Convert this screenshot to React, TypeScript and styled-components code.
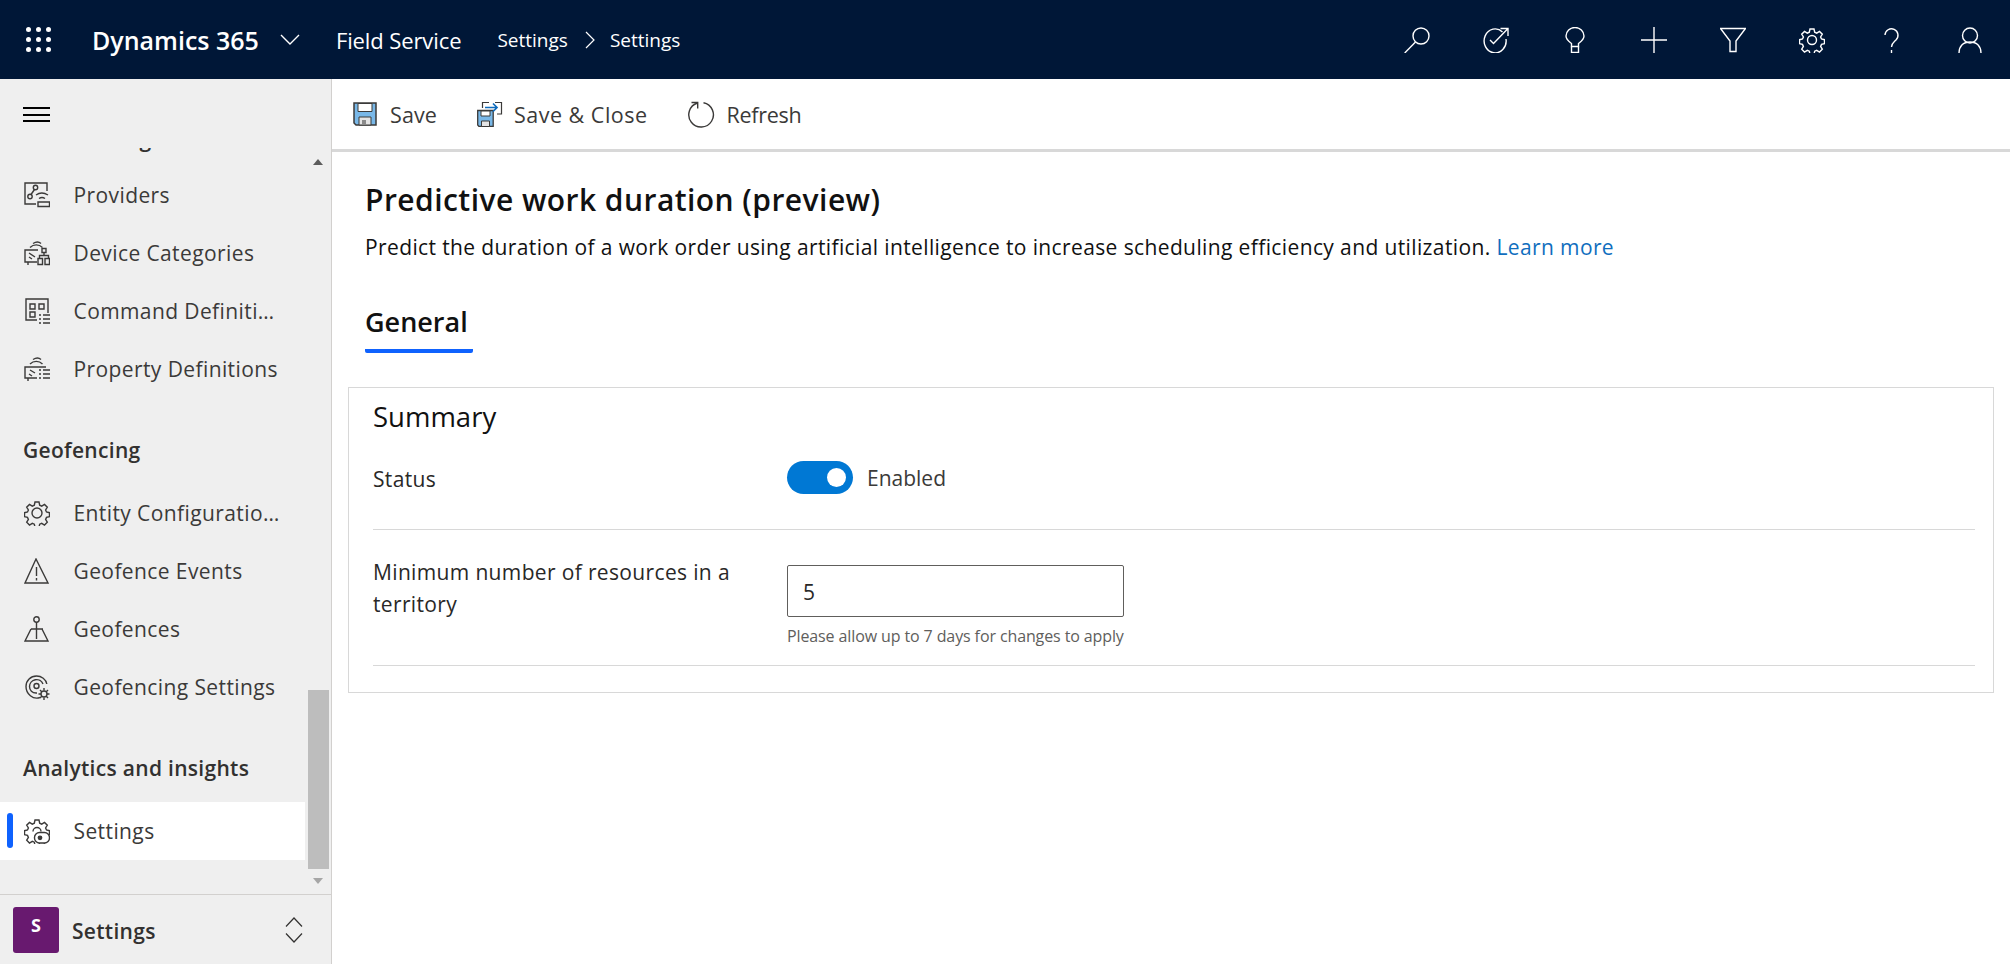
import React from "react";
import styled, { createGlobalStyle } from "styled-components";

const GlobalStyle = createGlobalStyle`
  html, body {
    margin: 0;
    padding: 0;
    height: 100%;
    overflow: hidden;
    background: #fff;
    font-family: "Open Sans", "Noto Sans", sans-serif;
  }
  * { box-sizing: border-box; }
`;

type IconProps = { size?: number; color?: string; children: React.ReactNode };

const Line = ({ size = 26, color = "currentColor", children }: IconProps) => (
  <svg width={size} height={size} viewBox="0 0 26 26" fill="none" stroke={color} strokeWidth="1.4">
    {children}
  </svg>
);

const gearPath =
  "M11 2h4l.7 3.2 2 .9 2.8-1.7 2.8 2.8-1.7 2.8.9 2 3 .7v4l-3 .7-.9 2 1.7 2.8-2.8 2.8-2.8-1.7-2 .9-.7 3h-4l-.7-3-2-.9-2.8 1.7-2.8-2.8 1.7-2.8-.9-2-3-.7v-4l3-.7.9-2-1.7-2.8 2.8-2.8 2.8 1.7 2-.9z";

const headerIcons = [
  <>
    <circle cx="17" cy="9" r="8" />
    <path d="M11.500 15 .7 26" />
  </>,
  <>
    <path d="M19.500 5A11 12 0 1 0 23 12" />
    <path d="M7 13l3.500 3.500L24.500 2M17.500 1.500h7.500v7.500" />
  </>,
  <>
    <path d="M9.500 19.500v-3C7 14.500 4 12.500 4 9a9 8.500 0 0 1 18 0c0 3.500-3 5.500-5.500 7.500v3z" />
    <path d="M9.500 19.500V25.500h7v-6" />
  </>,
  <path d="M13 0v26M0 13h26" />,
  <path d="M.5 1.500h25L16 14v10.500h-6V14z" />,
  <>
    <path d={gearPath} />
    <circle cx="13" cy="13" r="4.500" />
  </>,
  <>
    <path d="M7 8a6.500 6.500 0 1 1 11 5c-2.500 2.500-4.500 3.500-4.500 7" />
    <path d="M13.500 23v3" />
  </>,
  <>
    <circle cx="13" cy="8.500" r="7.500" />
    <path d="M2 26c0-6.500 4-11 11-11s11 4.500 11 11" />
  </>,
];

const SaveIcon = () => (
  <svg width="24" height="24" viewBox="0 0 24 24" fill="none">
    <path d="M1 1h22v22H3l-2-2z" fill="#79b8e8" stroke="#3b3a39" strokeWidth="1.500" />
    <path d="M5 1.500h14v8H5z" fill="#fff" stroke="#3b3a39" />
    <path d="M6 15h12v8H6z" fill="#e4e4e4" stroke="#3b3a39" />
    <path d="M9 18h4v5H9z" fill="#8a8a8a" />
  </svg>
);

const SaveCloseIcon = () => (
  <svg width="26" height="26" viewBox="0 0 26 26" fill="none">
    <path d="M.7 9.500h15.500v16H2L.7 24z" fill="#79b8e8" stroke="#3b3a39" strokeWidth="1.300" />
    <path d="M4 10h9v5H4z" fill="#fff" stroke="#3b3a39" />
    <path d="M4.500 20h8v5.500h-8z" fill="#e4e4e4" stroke="#3b3a39" />
    <path d="M5.500 7V1.500H12M18 1.500h6.500v11.500H20" stroke="#3b3a39" strokeWidth="1.200" />
    <path d="M8 6.500h12M16 2.500l4 4-4 4" stroke="#0f6cbd" strokeWidth="1.700" />
  </svg>
);

const RefreshIcon = () => (
  <svg width="27" height="27" viewBox="0 0 27 27" fill="none" stroke="#3b3a39" strokeWidth="1.400">
    <path d="M15.500 1.700A12.300 12.300 0 1 1 9.500 2" />
    <path d="M3.500 1.500h6.200v6" />
  </svg>
);

const navIcons: Record<string, React.ReactNode> = {
  providers: (
    <>
      <path d="M23 9V1H1v21h11" />
      <circle cx="11.500" cy="5.500" r="2.200" />
      <circle cx="6" cy="14.500" r="2.200" />
      <path d="M10.500 7.500 7 12.500" />
      <path d="M12 13c3.500-2.500 8-2.500 12 0M15 16.500c2-1.300 4-1.300 6 0" />
      <path d="M14 20h11.500v4.500H14z" />
    </>
  ),
  device: (
    <>
      <path d="M6 7.500c3.500-3.500 9-3.500 12.500 0M9 3.500c3-1.800 6-1.800 8 0" />
      <path d="M14 10H1v12h12M4 25v-3" />
      <path d="M5 13l6 4M5 17l3 2" />
      <path d="M18 8.500h4v4h-4zM20 12.500v3M15.500 18.500v-3h9v3M14 18.500h4.500v6H14zM21 18.500h4.500v6H21z" />
    </>
  ),
  command: (
    <>
      <path d="M24 15V1H2v21h11" />
      <path d="M6 6h5v5H6zM15 6h5v5h-5zM6 14h5v5H6z" />
      <path d="M15 17h2M19 17h7M15 21h2M19 21h7M15 25h2M19 25h7" />
    </>
  ),
  property: (
    <>
      <path d="M6 8c3.500-3.500 9-3.500 12.500 0M9 3.500c3-1.800 6-1.800 8 0" />
      <path d="M22 11H1v11h12M4 25v-3" />
      <path d="M6 14l5 3M5 18l3 2" />
      <path d="M15 14h2M19 14h7M15 18h2M19 18h7M15 22h2M19 22h7" />
    </>
  ),
  gear: (
    <>
      <path d={gearPath} />
      <circle cx="13" cy="13" r="5" />
    </>
  ),
  warning: (
    <>
      <path d="M12 1 1 25h23z" />
      <path d="M12.500 9v9M12.500 20v2.500" />
    </>
  ),
  fence: (
    <>
      <circle cx="12.500" cy="3.500" r="2.700" />
      <path d="M12.500 6v17M7 13h12M7 13 1 25h23l-6-12" />
    </>
  ),
  geoSettings: (
    <>
      <path d="M16 23.500C9 26 2 20 2 12.500A10.500 10.500 0 0 1 12.500 2c5 0 9.500 3.500 10.300 8" />
      <path d="M13 19c-5 .5-7.500-3-7.500-6.500a7 7 0 0 1 13.500-2.500" />
      <circle cx="12.500" cy="12" r="2.500" />
      <path d="M20 14v2.500M20 23.500V26M14.500 20H17M23 20h2.500M16 16l2 2M22 22l2 2M24 16l-2 2M18 22l-2 2" />
      <circle cx="20" cy="20" r="3" />
    </>
  ),
  settings: (
    <>
      <path d={gearPath} />
      <path d="M9 13.500a4 4 0 0 1 8 0" />
      <rect x="10.500" y="14.500" width="15" height="10.500" rx="5" fill="#fff" />
      <circle cx="16" cy="19.800" r="1.700" fill="currentColor" />
    </>
  ),
};

const navGroups = [
  {
    title: "Provisioning",
    clipped: true,
    items: [
      { label: "Providers", icon: "providers" },
      { label: "Device Categories", icon: "device" },
      { label: "Command Definitions", icon: "command" },
      { label: "Property Definitions", icon: "property" },
    ],
  },
  {
    title: "Geofencing",
    items: [
      { label: "Entity Configurations", icon: "gear" },
      { label: "Geofence Events", icon: "warning" },
      { label: "Geofences", icon: "fence" },
      { label: "Geofencing Settings", icon: "geoSettings" },
    ],
  },
  {
    title: "Analytics and insights",
    items: [{ label: "Settings", icon: "settings", active: true }],
  },
];

export default function App() {
  return (
    <Page>
      <GlobalStyle />
      <TopBar>
        <Waffle>
          {Array.from({ length: 9 }).map((_, i) => (
            <Dot key={i} />
          ))}
        </Waffle>
        <Brand>Dynamics 365</Brand>
        <svg width="20" height="11" viewBox="0 0 20 11" fill="none" stroke="#fff" strokeWidth="1.400">
          <path d="M1 1l9 9 9-9" />
        </svg>
        <AppName>Field Service</AppName>
        <Crumb>Settings</Crumb>
        <svg width="10" height="18" viewBox="0 0 10 18" fill="none" stroke="#fff" strokeWidth="1.200">
          <path d="M1 1l8 8-8 8" />
        </svg>
        <Crumb>Settings</Crumb>
        <TopActions>
          {headerIcons.map((icon, i) => (
            <TopButton key={i}>
              <Line color="#fff">{icon}</Line>
            </TopButton>
          ))}
        </TopActions>
      </TopBar>
      <Body>
        <Sidebar>
          <MenuRow>
            <Burger>
              <span />
              <span />
              <span />
            </Burger>
          </MenuRow>
          <ScrollArea>
            <NavList>
              {navGroups.map((group) => (
                <div key={group.title}>
                  <GroupTitle $clipped={group.clipped}>{group.title}</GroupTitle>
                  {group.items.map((item) => (
                    <NavItem key={item.label} $active={item.active}>
                      <NavIcon>
                        <Line color="#3b3a39">{navIcons[item.icon]}</Line>
                      </NavIcon>
                      <NavLabel>{item.label}</NavLabel>
                    </NavItem>
                  ))}
                </div>
              ))}
            </NavList>
            <ScrollBar>
              <Arrow />
              <Thumb />
              <Arrow $down />
            </ScrollBar>
          </ScrollArea>
          <AreaSwitcher>
            <AreaTile>S</AreaTile>
            <AreaName>Settings</AreaName>
            <svg width="18" height="26" viewBox="0 0 18 26" fill="none" stroke="#323130" strokeWidth="1.200">
              <path d="M1 9.500 9 1l8 8.500M1 16.500 9 25l8-8.500" />
            </svg>
          </AreaSwitcher>
        </Sidebar>
        <Main>
          <Toolbar>
            <ToolButton>
              <SaveIcon />
              Save
            </ToolButton>
            <ToolButton $gap={11} $track={0.5}>
              <SaveCloseIcon />
              Save &amp; Close
            </ToolButton>
            <ToolButton $gap={12} $track={-0.3}>
              <RefreshIcon />
              Refresh
            </ToolButton>
          </Toolbar>
          <Heading>
            <Title>Predictive work duration (preview)</Title>
            <Description>
              Predict the duration of a work order using artificial intelligence to increase
              scheduling efficiency and utilization. <LearnMore>Learn more</LearnMore>
            </Description>
            <Tab>General</Tab>
          </Heading>
          <Section>
            <SectionTitle>Summary</SectionTitle>
            <FieldRow $height={87}>
              <FieldLabel $top={20}>Status</FieldLabel>
              <ToggleWrap>
                <Toggle />
                <ToggleText>Enabled</ToggleText>
              </ToggleWrap>
            </FieldRow>
            <FieldRow $height={136}>
              <FieldLabel $top={26}>Minimum number of resources in a territory</FieldLabel>
              <InputWrap>
                <NumberBox>5</NumberBox>
                <Hint>Please allow up to 7 days for changes to apply</Hint>
              </InputWrap>
            </FieldRow>
          </Section>
        </Main>
      </Body>
    </Page>
  );
}

const Page = styled.div`
  display: flex;
  flex-direction: column;
  width: 2010px;
  height: 964px;
  overflow: hidden;
`;

const TopBar = styled.header`
  display: flex;
  align-items: center;
  flex: 0 0 79px;
  padding-left: 26px;
  background: #001737;
  color: #fff;
`;

const Waffle = styled.div`
  display: grid;
  grid-template-columns: repeat(3, 5px);
  gap: 5px;
  margin-right: 41px;
`;

const Dot = styled.i`
  width: 5px;
  height: 5px;
  border-radius: 50%;
  background: #fff;
`;

const Brand = styled.span`
  font-size: 25px;
  font-weight: 600;
  margin-right: 21px;
`;

const AppName = styled.span`
  font-size: 22px;
  font-weight: 400;
  letter-spacing: -0.1px;
  margin: 0 36px;
`;

const Crumb = styled.span`
  font-size: 19px;
  margin-right: 17px;
  & + svg + & {
    margin-left: 15px;
  }
`;

const TopActions = styled.div`
  display: flex;
  margin-left: auto;
  padding-right: 1px;
`;

const TopButton = styled.div`
  display: flex;
  align-items: center;
  justify-content: center;
  width: 79px;
  height: 79px;
`;

const Body = styled.div`
  display: flex;
  flex: 1;
  min-height: 0;
`;

const Sidebar = styled.aside`
  display: flex;
  flex-direction: column;
  flex: 0 0 332px;
  background: #efefef;
  border-right: 1px solid #d2d0ce;
`;

const MenuRow = styled.div`
  display: flex;
  align-items: center;
  flex: 0 0 69px;
  padding: 2px 0 0 23px;
`;

const Burger = styled.div`
  display: flex;
  flex-direction: column;
  gap: 4.500px;
  width: 27px;
  span {
    height: 2px;
    background: #000;
  }
`;

const ScrollArea = styled.div`
  display: flex;
  flex: 1;
  min-height: 0;
  border-bottom: 1px solid #d2d0ce;
`;

const NavList = styled.nav`
  flex: 0 0 305px;
  overflow: hidden;
`;

const GroupTitle = styled.div<{ $clipped?: boolean }>`
  height: 86px;
  padding: 39px 0 0 23px;
  margin-top: ${(p) => (p.$clipped ? "-61px" : "0")};
  margin-bottom: ${(p) => (p.$clipped ? "-7px" : "0")};
  font-size: 21px;
  line-height: 26px;
  font-weight: 600;
  letter-spacing: 0.3px;
  color: #323130;
`;

const NavItem = styled.div<{ $active?: boolean }>`
  position: relative;
  display: flex;
  align-items: center;
  height: 58px;
  padding-left: 24px;
  background: ${(p) => (p.$active ? "#fff" : "transparent")};
  &::before {
    content: "";
    display: ${(p) => (p.$active ? "block" : "none")};
    position: absolute;
    left: 7px;
    top: 11px;
    width: 6px;
    height: 35px;
    border-radius: 3px;
    background: #0f62fe;
  }
`;

const NavIcon = styled.span`
  display: flex;
  flex: 0 0 49.500px;
  color: #3b3a39;
`;

const NavLabel = styled.span`
  width: 208px;
  font-size: 21px;
  letter-spacing: 0.4px;
  color: #3b3a39;
  white-space: nowrap;
  overflow: hidden;
  text-overflow: ellipsis;
`;

const ScrollBar = styled.div`
  display: flex;
  flex-direction: column;
  align-items: center;
  justify-content: space-between;
  width: 22px;
  margin-left: 2px;
  padding: 11px 0 10px;
`;

const Arrow = styled.i<{ $down?: boolean }>`
  width: 0;
  height: 0;
  border-left: 5.500px solid transparent;
  border-right: 5.500px solid transparent;
  border-bottom: ${(p) => (p.$down ? "0" : "6px solid #5c5c5c")};
  border-top: ${(p) => (p.$down ? "6px solid #a6a6a6" : "0")};
  margin-top: ${(p) => (p.$down ? "9px" : "0")};
`;

const Thumb = styled.div`
  width: 21px;
  height: 179px;
  margin-top: auto;
  background: #bdbdbd;
`;

const AreaSwitcher = styled.div`
  display: flex;
  align-items: center;
  flex: 0 0 69px;
  padding: 0 28px 0 13px;
`;

const AreaTile = styled.div`
  display: flex;
  justify-content: center;
  width: 46px;
  height: 46px;
  padding-top: 6px;
  border-radius: 3px;
  background: #68196f;
  color: #fff;
  font-size: 18px;
  font-weight: 700;
`;

const AreaName = styled.span`
  flex: 1;
  margin-left: 13px;
  padding-top: 2px;
  font-size: 21px;
  font-weight: 600;
  letter-spacing: 0.3px;
  color: #323130;
`;

const Main = styled.main`
  flex: 1;
  min-width: 0;
  background: #fff;
`;

const Toolbar = styled.div`
  display: flex;
  align-items: center;
  gap: 40px;
  height: 73px;
  padding-left: 21px;
  border-bottom: 3px solid #d8d8d8;
`;

const ToolButton = styled.div<{ $gap?: number; $track?: number }>`
  display: flex;
  align-items: center;
  gap: ${(p) => p.$gap ?? 13}px;
  font-size: 21.500px;
  letter-spacing: ${(p) => p.$track ?? 0.1}px;
  color: #3b3a39;
`;

const Heading = styled.div`
  padding: 29px 0 0 33px;
`;

const Title = styled.h1`
  margin: 0;
  font-size: 30px;
  line-height: 38px;
  font-weight: 600;
  letter-spacing: 0.45px;
  color: #111;
`;

const Description = styled.p`
  margin: 13px 0 0;
  font-size: 21px;
  line-height: 30px;
  letter-spacing: 0.38px;
  color: #111;
`;

const LearnMore = styled.span`
  color: #106ebe;
`;

const Tab = styled.div`
  display: inline-block;
  margin-top: 42px;
  width: 108px;
  height: 49px;
  font-size: 27px;
  line-height: 36px;
  font-weight: 600;
  color: #111;
  border-bottom: 4px solid #0f62fe;
  border-radius: 0 0 2px 2px;
`;

const Section = styled.section`
  margin: 34px 16px 0;
  height: 306px;
  padding: 11px 18px 0 24px;
  border: 1px solid #d8d8d8;
`;

const SectionTitle = styled.h2`
  margin: 0;
  height: 44px;
  font-size: 27.500px;
  line-height: 36px;
  font-weight: 400;
  color: #111;
`;

const FieldRow = styled.div<{ $height: number }>`
  display: grid;
  grid-template-columns: 414px 1fr;
  height: ${(p) => p.$height}px;
  border-bottom: 1px solid #d8d8d8;
`;

const FieldLabel = styled.div<{ $top: number }>`
  padding: ${(p) => p.$top}px 20px 0 0;
  font-size: 21px;
  line-height: 32px;
  letter-spacing: 0.35px;
  color: #292827;
`;

const ToggleWrap = styled.div`
  display: flex;
  align-items: flex-start;
  gap: 14px;
  padding-top: 18px;
`;

const Toggle = styled.div`
  position: relative;
  width: 66px;
  height: 33px;
  border-radius: 17px;
  background: #0078d4;
  &::after {
    content: "";
    position: absolute;
    right: 7px;
    top: 7px;
    width: 19px;
    height: 19px;
    border-radius: 50%;
    background: #fff;
  }
`;

const ToggleText = styled.span`
  padding-top: 1px;
  font-size: 21px;
  line-height: 32px;
  color: #3b3a39;
`;

const InputWrap = styled.div`
  padding-top: 35px;
`;

const NumberBox = styled.div`
  width: 337px;
  height: 52px;
  padding-left: 15px;
  border: 1px solid #605e5c;
  border-radius: 2px;
  font-size: 21px;
  line-height: 52px;
  color: #292827;
`;

const Hint = styled.div`
  width: 337px;
  margin-top: 8px;
  font-size: 16px;
  line-height: 22px;
  letter-spacing: -0.11px;
  color: #605e5c;
`;
